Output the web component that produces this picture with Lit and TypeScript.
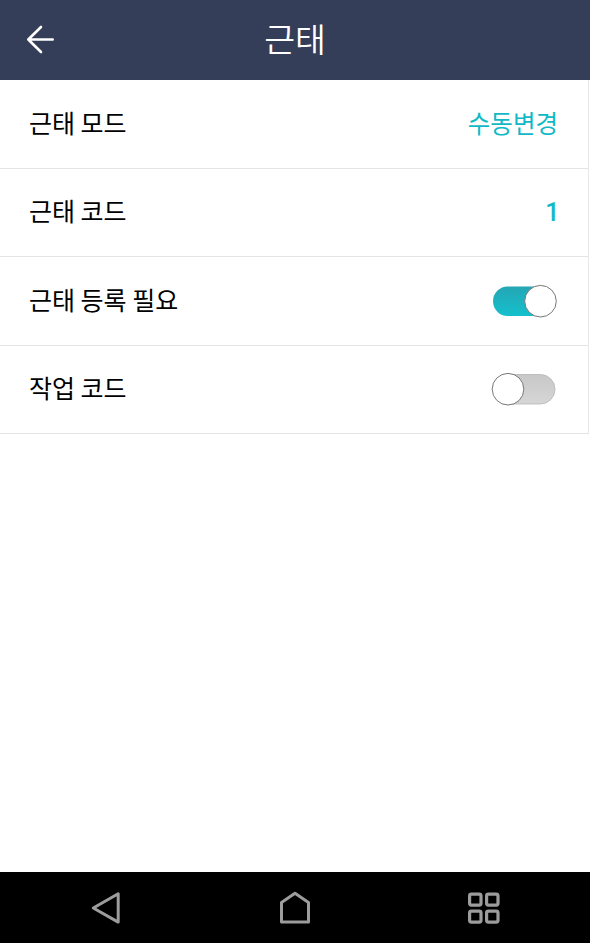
import { LitElement, html, css, svg } from "lit";
import { customElement, property } from "lit/decorators.js";

@customElement("toggle-switch")
class ToggleSwitch extends LitElement {
  @property({ type: Boolean, reflect: true }) on = false;
  static styles = css`
    :host { display: block; width: 66px; height: 34px; }
    svg { display: block; }
  `;
  render() {
    return html`<svg width="66" height="34" viewBox="0 0 66 34">
      <defs>
        <linearGradient id="on" x1="0" y1="0" x2="0" y2="1"><stop offset="0" stop-color="#25a6b4"/><stop offset="1" stop-color="#14c0cd"/></linearGradient>
        <linearGradient id="off" x1="0" y1="0" x2="0" y2="1"><stop offset="0" stop-color="#c8c8c8"/><stop offset="1" stop-color="#d6d6d6"/></linearGradient>
      </defs>
      ${this.on
        ? svg`<rect x="2" y="2.5" width="62" height="29.5" rx="14.7" fill="url(#on)"/><circle cx="49.5" cy="17.2" r="15.8" fill="#fff" stroke="#777" stroke-width="1"/>`
        : svg`<rect x="3" y="2.5" width="61" height="29.5" rx="14.7" fill="url(#off)" stroke="#b5b5b5" stroke-width=".8"/><circle cx="17" cy="17.2" r="15.8" fill="#fff" stroke="#777" stroke-width="1"/>`}
    </svg>`;
  }
}

@customElement("app-root")
class AppRoot extends LitElement {
  static styles = css`
    :host { display: flex; flex-direction: column; height: 943px; background: #fff; font-family: "Noto Sans CJK KR", sans-serif; color: #000; }
    header { display: grid; grid-template-columns: 80px 1fr 80px; align-items: center; height: 80px; background: #353e58; color: #fff; }
    h1 { margin: 0; padding: 0 0 5px; text-align: center; font-size: 33.5px; font-weight: 350; line-height: 75px; }
    svg { display: block; }
    .list { flex: 1; }
    .row { display: flex; box-sizing: border-box; align-items: center; justify-content: space-between; width: 589px; height: 88.5px; padding: 0 31px 0 29px; border-bottom: 1px solid #e4e4e4; border-right: 1px solid #e8e8e8; font-size: 25px; line-height: 36px; }
    .row span { padding-bottom: 4px; }
    .row .value { margin-right: -1px; padding-bottom: 2px; color: #10b9c5; font-size: 24.5px; }
    .row .code { margin-right: -2.5px; padding: 2px 0 0; font-family: Roboto, sans-serif; font-size: 25px; font-weight: 500; }
    nav { display: grid; grid-template-columns: repeat(3, 189px); justify-content: center; justify-items: center; align-items: center; height: 71px; background: #000; }
  `;
  render() {
    return html`
      <header>
        <svg width="80" height="80" viewBox="0 0 80 80" fill="none" stroke="#fff" stroke-width="2.6" stroke-linecap="round" stroke-linejoin="round"><path d="M52.7 39.5H28.3M41 27L28.3 39.5L41 52"/></svg>
        <h1>근태</h1>
      </header>
      <div class="list">
        <div class="row"><span>근태 모드</span><span class="value">수동변경</span></div>
        <div class="row"><span>근태 코드</span><span class="value code">1</span></div>
        <div class="row"><span>근태 등록 필요</span><toggle-switch on></toggle-switch></div>
        <div class="row"><span>작업 코드</span><toggle-switch></toggle-switch></div>
      </div>
      <nav>
        <svg width="40" height="40" viewBox="0 0 40 40" fill="none" stroke="#9c9c9c" stroke-width="3" stroke-linejoin="round"><path d="M7.3 20L32.2 5.7V34.1Z"/></svg>
        <svg width="40" height="40" viewBox="0 0 40 40" fill="none" stroke="#9c9c9c" stroke-width="3" stroke-linejoin="round"><path d="M6.5 14.5L20 5.2L33.5 14.5V34H6.5Z"/></svg>
        <svg width="40" height="40" viewBox="0 0 40 40" fill="none" stroke="#9c9c9c" stroke-width="3.2"><rect x="5.6" y="6.1" width="11.4" height="11" rx="1.8"/><rect x="22.6" y="6.1" width="11.4" height="11" rx="1.8"/><rect x="5.6" y="23.1" width="11.4" height="11" rx="1.8"/><rect x="22.6" y="23.1" width="11.4" height="11" rx="1.8"/></svg>
      </nav>`;
  }
}
